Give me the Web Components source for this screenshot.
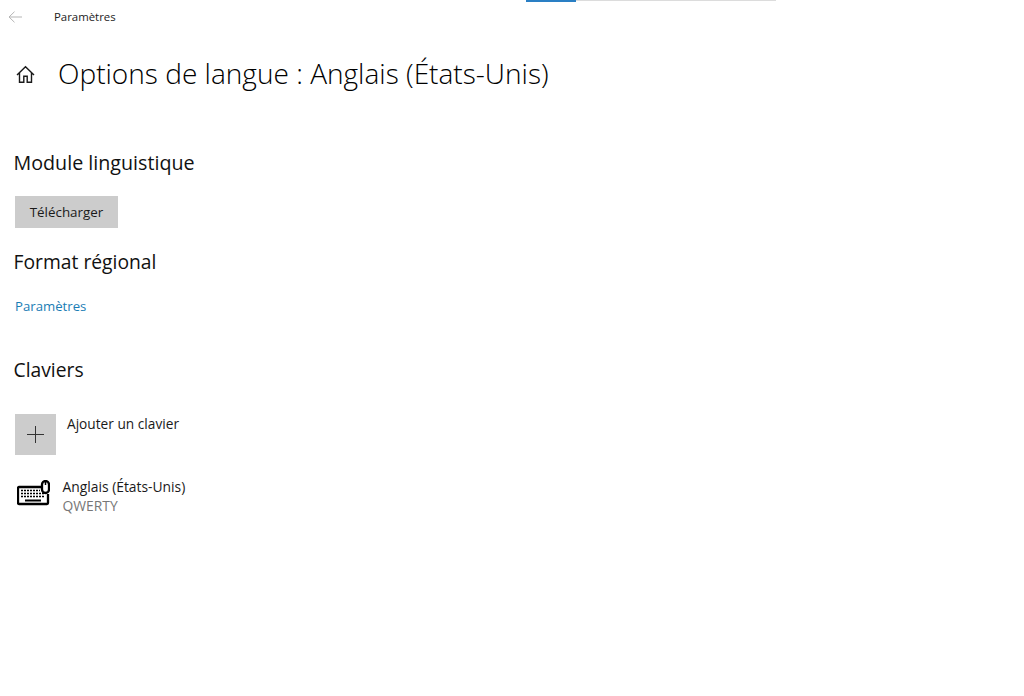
<!DOCTYPE html>
<html lang="fr"><head><meta charset="utf-8"><title>Options de langue</title>
<style>
html,body{margin:0;padding:0;background:#fff;}
body{width:1024px;height:696px;overflow:hidden;font-family:"Open Sans","Noto Sans",sans-serif;color:#111;position:relative}
</style></head><body>
<settings-page></settings-page>
<script>
function def(name,html){customElements.define(name,class extends HTMLElement{constructor(){super();this.attachShadow({mode:'open'}).innerHTML=html;}});}
def('progress-strip',`<style>:host{display:flex;align-items:flex-start;width:250px;height:2px;margin-left:526px}i{display:block;width:50px;height:2px;background:#2a7fc4}b{display:block;flex:1;height:1px;background:#dcdcdc}</style><i></i><b></b>`);
def('title-bar',`<style>:host{display:flex;align-items:center;height:29px;font-size:11.4px;color:#222}
svg{margin-left:8px;width:14px;height:12px;flex:none}span{margin-left:32px}</style>
<svg viewBox="0 0 14 12" fill="none" stroke="#b5b5b5" stroke-width="1"><path d="M14 6H1M6.5 .7 1 6l5.5 5.3"/></svg><span><slot></slot></span>`);
def('page-header',`<style>:host{display:flex;align-items:center;height:40px;margin-top:22px;font-size:28.05px;font-weight:300;color:#000}
svg{margin-left:16px;width:19px;height:19px;flex:none;margin-top:2px}span{margin-left:23px;white-space:nowrap}</style>
<svg viewBox="0 0 19 19" fill="none" stroke="#1a1a1a" stroke-width="1.4"><path d="M1 10 9.5 1.7 18 10M3.5 8v9.3h4.3v-6h3.4v6h4.3V8"/></svg><span><slot></slot></span>`);
def('section-title',`<style>:host{display:block;font-size:19.3px;line-height:26px;color:#111;margin-left:13.5px;white-space:nowrap}</style><slot></slot>`);
def('flat-button',`<style>:host{display:flex;align-items:center;justify-content:center;width:103px;height:32px;background:#ccc;font-size:13.4px;color:#1a1a1a;margin-left:15px}</style><slot></slot>`);
def('text-link',`<style>:host{display:block;font-size:13.2px;line-height:20px;color:#1a7db5;margin-left:15px}</style><slot></slot>`);
def('add-row',`<style>:host{display:flex;align-items:flex-start;margin-left:15px;font-size:13.7px;color:#1a1a1a}
.b{width:41px;height:41px;background:#ccc;display:flex;align-items:center;justify-content:center;flex:none}
svg{width:17px;height:17px}span{margin-left:11px;line-height:20px}</style>
<div class="b"><svg viewBox="0 0 17 17" stroke="#333" stroke-width="1"><path d="M8.5 0v17M0 8.5h17"/></svg></div><span><slot></slot></span>`);
def('keyboard-row',`<style>:host{display:flex;align-items:flex-start;margin-left:17px;font-size:13.85px;color:#1a1a1a}
svg{width:33px;height:26px;flex:none}div{margin-left:12.5px;line-height:19px;margin-top:-3px}small{display:block;font-size:13.85px;color:#777}</style>
<svg viewBox="0 0 33 26" fill="none" stroke="#000"><path stroke-width="2.3" d="M24 7H2a1 1 0 0 0-1 1v15a1 1 0 0 0 1 1h28a1 1 0 0 0 1-1V14"/>
<rect x="25" y="1" width="7" height="12" rx="3.5" stroke-width="2.3" fill="#fff"/><path d="M28.5 1v4" stroke-width="1.5"/>
<path stroke-width="1.6" stroke-dasharray="2 1" d="M4 10.5h19M4 13.5h23M4 16.5h23"/><path stroke-width="2" d="M8 20.5h16"/></svg>
<div><slot></slot><small><slot name="sub"></slot></small></div>`);
def('settings-page',`<style>:host{display:block}</style>
<progress-strip></progress-strip>
<title-bar>Paramètres</title-bar>
<page-header>Options de langue : Anglais (États-Unis)</page-header>
<section-title style="margin-top:57px;font-size:19.7px">Module linguistique</section-title>
<flat-button style="margin-top:20px">Télécharger</flat-button>
<section-title style="margin-top:21px">Format régional</section-title>
<text-link style="margin-top:21px">Paramètres</text-link>
<section-title style="margin-top:41px">Claviers</section-title>
<add-row style="margin-top:31px">Ajouter un clavier</add-row>
<keyboard-row style="margin-top:25px">Anglais (États-Unis)<span slot="sub">QWERTY</span></keyboard-row>`);
</script>
</body></html>
